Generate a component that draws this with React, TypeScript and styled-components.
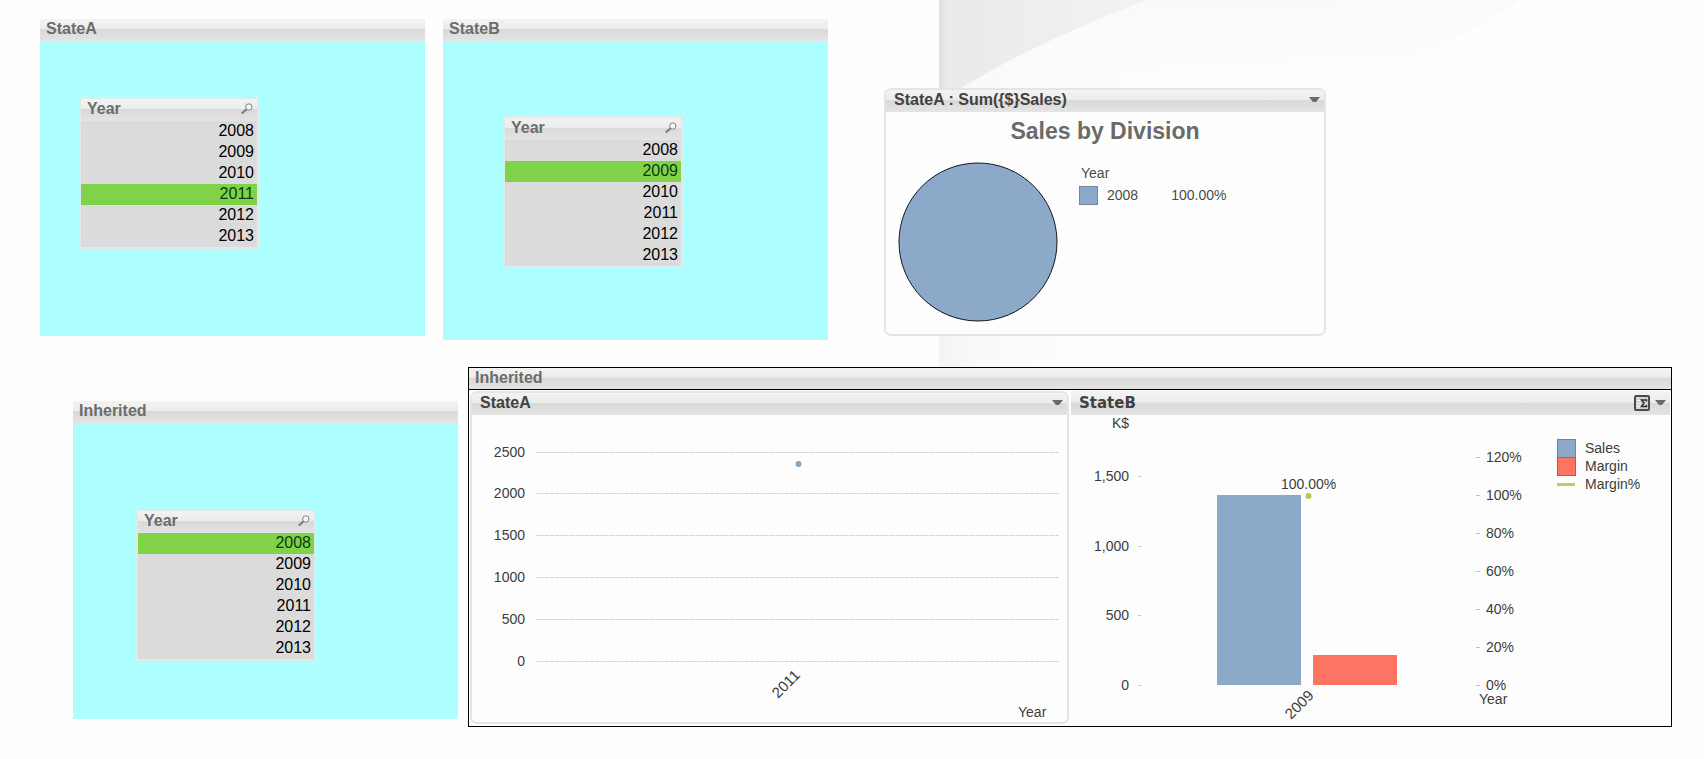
import React from "react";
import styled, { createGlobalStyle, css } from "styled-components";

const GlobalStyle = createGlobalStyle`
  * { box-sizing: border-box; }
  body {
    margin: 0;
    background: #fefefe;
    font-family: "Liberation Sans", Arial, sans-serif;
  }
`;

const captionGradient = css`
  background: linear-gradient(#f3f3f3 0%, #ececec 44%, #d9d9d9 48%, #e4e4e4 100%);
`;

const Sheet = styled.main`
  position: relative;
  display: flex;
  flex-direction: column;
  gap: 27px;
  padding: 19px 0 31px;
`;

const Backdrop = styled.svg`
  position: absolute;
  top: 0;
  left: 55.1%;
  width: 44.9%;
  height: 367px;
  z-index: -1;
`;

const TopRow = styled.div`
  display: grid;
  grid-template-columns: 385fr 385fr 480fr 360fr;
  align-items: start;
  gap: 18px;
  padding-left: 40px;
`;

const BottomRow = styled.div`
  display: grid;
  grid-template-columns: 385fr 1204fr;
  align-items: start;
  gap: 10px;
  padding: 0 32px 0 73px;
`;

const Container = styled.section<{ $drop?: number }>`
  margin-top: ${(p) => p.$drop ?? 0}px;
`;

const Caption = styled.header<{ $inset?: number; $strong?: boolean; $height?: number }>`
  ${captionGradient}
  display: flex;
  align-items: center;
  justify-content: space-between;
  height: ${(p) => p.$height ?? 22}px;
  padding: 0 4px 2px ${(p) => p.$inset ?? 6}px;
  color: ${(p) => (p.$strong ? "#414141" : "#6c6c6c")};
`;

const CaptionTitle = styled.h2<{ $wide?: boolean }>`
  margin: 0;
  font-family: ${(p) => (p.$wide ? '"DejaVu Sans", Verdana, sans-serif' : "inherit")};
  font-size: ${(p) => (p.$wide ? 15 : 16)}px;
  font-weight: bold;
  line-height: 20px;
`;

const CaptionButtons = styled.div`
  display: flex;
  align-items: center;
  gap: 5px;
`;

const IconButton = styled.button`
  display: flex;
  padding: 0;
  border: 0;
  background: none;
  cursor: pointer;
`;

const StateBody = styled.div<{ $left: number; $top: number; $height: number }>`
  min-height: ${(p) => p.$height}px;
  padding: ${(p) => p.$top}px 0 0 ${(p) => p.$left}px;
  background: #aeffff;
`;

const ListBox = styled.div`
  width: 180px;
  border: 2px solid #dcebeb;
`;

const Values = styled.ul`
  margin: 0;
  padding: 0;
  list-style: none;
`;

const Value = styled.button<{ $selected: boolean }>`
  display: block;
  width: 100%;
  height: 21px;
  padding: 0 3px 2px;
  border: 0;
  background: ${(p) => (p.$selected ? "#80d349" : "#dbdbdb")};
  color: ${(p) => (p.$selected ? "#0b3a12" : "#000")};
  font-family: inherit;
  font-size: 16px;
  line-height: 19px;
  text-align: right;
  cursor: pointer;
`;

const ChartFrame = styled.section`
  border: 2px solid #e5e5e5;
  border-radius: 7px;
  background: #fefefe;
  overflow: hidden;
`;

const PieFrame = styled(ChartFrame)`
  margin: 69px 0 0 38px;
`;

const ChartTitle = styled.h3`
  margin: 6px 0 0;
  color: #6a6a6a;
  font-size: 23px;
  line-height: 26px;
  text-align: center;
`;

const PieBody = styled.div`
  display: flex;
  gap: 21px;
  padding: 18px 12px 12px;
  color: #4a4a4a;
  font-size: 14px;
  line-height: 18px;
`;

const PieLegend = styled.div`
  padding-top: 2px;
`;

const LegendTitle = styled.div`
  padding-left: 2px;
`;

const LegendRow = styled.div`
  display: flex;
  margin-top: 4px;
`;

const Swatch = styled.span`
  width: 19px;
  height: 19px;
  margin-right: 9px;
  border: 1px solid #71869d;
  background: #8da9ca;
`;

const LegendLabel = styled.span`
  margin-right: 33px;
`;

const Group = styled.section`
  border: 1px solid #000;
  background: #fefefe;
`;

const GroupCaption = styled(Caption)`
  border-bottom: 1px solid #000;
`;

const GroupCharts = styled.div`
  display: grid;
  grid-template-columns: 1fr 1fr;
  align-items: start;
  gap: 2px;
  padding: 1px 1px 2px;
`;

const PlainChart = styled.section`
  border-top: 1px solid #f6f6f6;
`;

const Plot = styled.svg`
  display: block;
  width: 100%;
  height: auto;
  font-size: 14px;
  fill: #3c3c3c;
`;

const YEARS = [2008, 2009, 2010, 2011, 2012, 2013];

const SearchIcon = () => (
  <svg width="12" height="12" viewBox="0 0 12 12" fill="none" aria-hidden="true">
    <circle cx="7.8" cy="4" r="3.2" fill="#f6f6f6" stroke="#808080" />
    <path d="M5.4 6.4 0.8 10.6" stroke="#777" strokeWidth="2" />
  </svg>
);

const MenuArrow = () => (
  <svg width="11" height="6" viewBox="0 0 11 6" aria-hidden="true">
    <path d="M0 0H11L7 5H4Z" fill="#6a6a6a" />
  </svg>
);

const PivotIcon = () => (
  <svg width="16" height="16" viewBox="0 0 16 16" fill="none" aria-hidden="true">
    <rect x="1" y="1" width="14" height="14" rx="1" fill="#d4d4d4" stroke="#4b4b4b" strokeWidth="2" />
    <path d="M3 5.5H7M3 8.5H7M3 11.5H7" stroke="#f5f5f5" />
    <path d="M12.5 6.5V5H7.5L10 8 7.5 11.5H12.5V10" stroke="#333" strokeWidth="1.5" />
  </svg>
);

function YearList({ selected }: { selected: number }) {
  return (
    <ListBox>
      <Caption>
        <CaptionTitle as="h3">Year</CaptionTitle>
        <IconButton type="button" aria-label="Search years">
          <SearchIcon />
        </IconButton>
      </Caption>
      <Values>
        {YEARS.map((year) => (
          <li key={year}>
            <Value type="button" $selected={year === selected} aria-pressed={year === selected}>
              {year}
            </Value>
          </li>
        ))}
      </Values>
    </ListBox>
  );
}

interface StatePanelProps {
  title: string;
  selected: number;
  left: number;
  top: number;
  height: number;
  drop?: number;
}

function StatePanel({ title, selected, left, top, height, drop }: StatePanelProps) {
  return (
    <Container $drop={drop}>
      <Caption>
        <CaptionTitle>{title}</CaptionTitle>
      </Caption>
      <StateBody $left={left} $top={top} $height={height}>
        <YearList selected={selected} />
      </StateBody>
    </Container>
  );
}

function PieChart() {
  return (
    <PieFrame>
      <Caption $inset={8} $strong>
        <CaptionTitle>StateA : Sum({"{$}"}Sales)</CaptionTitle>
        <IconButton type="button" aria-label="Chart menu">
          <MenuArrow />
        </IconButton>
      </Caption>
      <ChartTitle>Sales by Division</ChartTitle>
      <PieBody>
        <svg width="160" height="160" role="img" aria-label="2008: 100.00%">
          <circle cx="80" cy="80" r="79" fill="#8da9ca" stroke="#10181f" />
        </svg>
        <PieLegend>
          <LegendTitle>Year</LegendTitle>
          <LegendRow>
            <Swatch />
            <LegendLabel>2008</LegendLabel>
            <span>100.00%</span>
          </LegendRow>
        </PieLegend>
      </PieBody>
    </PieFrame>
  );
}

const LINE_TICKS = [
  { label: "2500", y: 37 },
  { label: "2000", y: 78 },
  { label: "1500", y: 120 },
  { label: "1000", y: 162 },
  { label: "500", y: 204 },
  { label: "0", y: 246 },
];

function LineChart() {
  return (
    <ChartFrame>
      <Caption $inset={8} $strong>
        <CaptionTitle>StateA</CaptionTitle>
        <IconButton type="button" aria-label="Chart menu">
          <MenuArrow />
        </IconButton>
      </Caption>
      <Plot viewBox="0 0 595 307">
        {LINE_TICKS.map(({ label, y }) => (
          <g key={label}>
            <text x="53" y={y + 5} textAnchor="end">{label}</text>
            <path d={`M64 ${y + 0.5}H587`} stroke="#e4e4e4" />
            <path d={`M64 ${y + 0.5}H587`} stroke="#d2d2d2" strokeDasharray="2 3" />
          </g>
        ))}
        <circle cx="326.5" cy="49" r="3" fill="#86a5c4" />
        <text transform="translate(306 284) rotate(-45)" fontSize="15">2011</text>
        <text x="546" y="302">Year</text>
      </Plot>
    </ChartFrame>
  );
}

const AMOUNT_TICKS = [
  { label: "1,500", y: 61 },
  { label: "1,000", y: 131 },
  { label: "500", y: 200 },
  { label: "0", y: 270 },
];

const PERCENT_TICKS = [120, 100, 80, 60, 40, 20, 0];

function BarChart() {
  return (
    <PlainChart>
      <Caption $inset={8} $height={23} $strong>
        <CaptionTitle $wide>StateB</CaptionTitle>
        <CaptionButtons>
          <IconButton type="button" aria-label="Switch view">
            <PivotIcon />
          </IconButton>
          <IconButton type="button" aria-label="Chart menu">
            <MenuArrow />
          </IconButton>
        </CaptionButtons>
      </Caption>
      <Plot viewBox="0 0 599 309">
        <text x="58" y="13" textAnchor="end">K$</text>
        {AMOUNT_TICKS.map(({ label, y }) => (
          <g key={label}>
            <text x="58" y={y + 5} textAnchor="end">{label}</text>
            <path d={`M67 ${y + 0.5}H70`} stroke="#c4c4c4" />
          </g>
        ))}
        <rect x="146" y="80" width="84" height="190" fill="#8da9ca" />
        <rect x="242" y="240" width="84" height="30" fill="#fd7463" />
        <circle cx="237.5" cy="81" r="3" fill="#b3cb50" />
        <text x="210" y="74">100.00%</text>
        <text transform="translate(220 305) rotate(-45)" fontSize="15">2009</text>
        {PERCENT_TICKS.map((value, i) => (
          <g key={value}>
            <path d={`M405 ${42.5 + i * 38}H409`} stroke="#c4c4c4" />
            <text x="415" y={47 + i * 38}>{value}%</text>
          </g>
        ))}
        <text x="408" y="289">Year</text>
        <rect x="486.5" y="24.5" width="18" height="18" fill="#8da9ca" stroke="#71869d" />
        <rect x="486.5" y="42.5" width="18" height="18" fill="#fd7463" stroke="#8f6a6a" />
        <rect x="486" y="68" width="18" height="3" fill="#b9cf5c" />
        <text x="514" y="38">Sales</text>
        <text x="514" y="56">Margin</text>
        <text x="514" y="74">Margin%</text>
      </Plot>
    </PlainChart>
  );
}

function SheetBackdrop() {
  return (
    <Backdrop viewBox="0 0 765 367" preserveAspectRatio="none" aria-hidden="true">
      <defs>
        <linearGradient id="edge" x1="0" x2="1">
          <stop offset="0" stopColor="#f4f4f4" />
          <stop offset="0.04" stopColor="#f9f9f9" />
          <stop offset="0.12" stopColor="#fcfcfc" />
          <stop offset="0.3" stopColor="#fefefe" />
        </linearGradient>
        <linearGradient id="sweep" x1="0" x2="1">
          <stop offset="0" stopColor="#e0e0e0" />
          <stop offset="0.04" stopColor="#eaeaea" />
          <stop offset="0.5" stopColor="#eeeeee" />
          <stop offset="1" stopColor="#f3f3f3" />
        </linearGradient>
        <linearGradient id="glow" x1="0.3" y1="0" x2="0.5" y2="1">
          <stop offset="0" stopColor="#fafafa" />
          <stop offset="1" stopColor="#fafafa" stopOpacity="0" />
        </linearGradient>
      </defs>
      <rect width="765" height="367" fill="url(#edge)" />
      <path d="M180 0H580Q450 90 240 110L20 88Z" fill="url(#glow)" />
      <path d="M0 0H208Q95 43 22 88L0 102Z" fill="url(#sweep)" />
    </Backdrop>
  );
}

export default function App() {
  return (
    <>
      <GlobalStyle />
      <Sheet>
        <SheetBackdrop />
        <TopRow>
          <StatePanel title="StateA" selected={2011} left={39} top={56} height={295} />
          <StatePanel title="StateB" selected={2009} left={60} top={75} height={299} />
          <PieChart />
        </TopRow>
        <BottomRow>
          <StatePanel title="Inherited" selected={2008} left={63} top={86} height={296} drop={34} />
          <Group>
            <GroupCaption>
              <CaptionTitle>Inherited</CaptionTitle>
            </GroupCaption>
            <GroupCharts>
              <LineChart />
              <BarChart />
            </GroupCharts>
          </Group>
        </BottomRow>
      </Sheet>
    </>
  );
}
